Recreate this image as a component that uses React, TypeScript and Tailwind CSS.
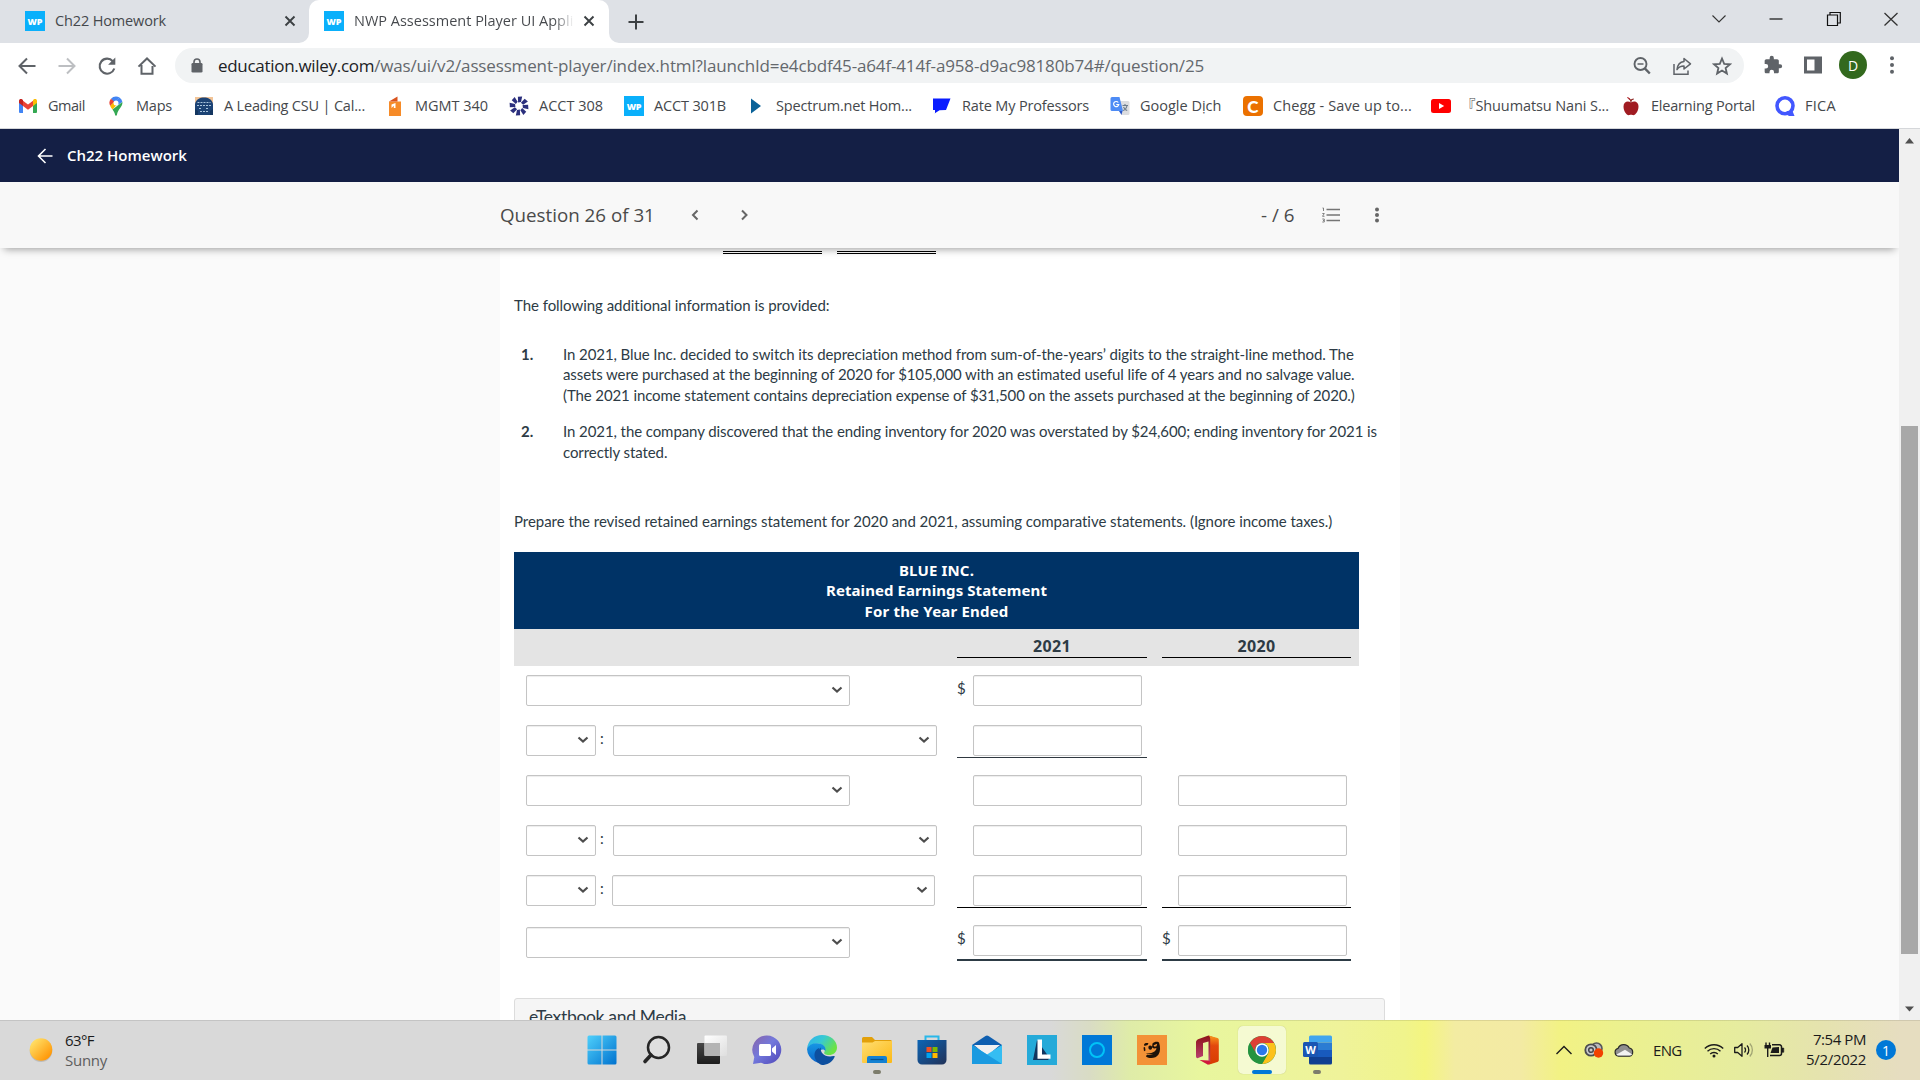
import type { ReactNode } from "react";

function WpIcon() {
  return (
    <span className="flex h-5 w-5 shrink-0 items-center justify-center bg-[#0ab0fb] font-['Open_Sans',sans-serif] text-[9px] font-extrabold leading-none text-white">
      WP
    </span>
  );
}

function CloseX() {
  return (
    <svg width="12" height="12" viewBox="0 0 12 12" stroke="#3c4043" strokeWidth="1.9" fill="none">
      <path d="M1.5 1.5l9 9M10.5 1.5l-9 9" />
    </svg>
  );
}

function TabStrip() {
  return (
    <div className="flex h-[43px] shrink-0 bg-[#dee1e6] text-[14.5px] text-[#45484c]">
      <div className="flex h-full w-[299px] items-center pl-[25px] pb-px">
        <WpIcon />
        <span className="ml-[10px] w-[225px] whitespace-nowrap pb-px tracking-[-0.14px]">Ch22 Homework</span>
        <span className="ml-[4px]"><CloseX /></span>
      </div>
      <svg className="self-end" width="10" height="10" viewBox="0 0 10 10">
        <path d="M10 0v10H0A10 10 0 0 0 10 0z" fill="#fff" />
      </svg>
      <div className="flex h-full w-[300px] items-center rounded-t-[10px] bg-white pl-[15px] pb-px">
        <WpIcon />
        <span className="ml-[10px] w-[220px] overflow-hidden whitespace-nowrap bg-linear-to-r from-[#45484c] from-91% to-transparent bg-clip-text pb-px text-transparent">
          NWP Assessment Player UI Appli
        </span>
        <span className="ml-[9px]"><CloseX /></span>
      </div>
      <svg className="self-end" width="10" height="10" viewBox="0 0 10 10">
        <path d="M0 0v10h10A10 10 0 0 1 0 0z" fill="#fff" />
      </svg>
      <div className="flex w-[34px] items-center justify-center">
        <svg width="16" height="16" viewBox="0 0 16 16" stroke="#3c4043" strokeWidth="2"><path d="M8 0.5v15M0.5 8h15" /></svg>
      </div>
      <div className="ml-auto flex h-[37px] items-center gap-[41.500px] pr-[21px]">
        <svg width="16" height="16" viewBox="0 0 16 16" fill="none" stroke="#333" strokeWidth="1.1"><path d="M1.5 4.500L8 11l6.500-6.500" /></svg>
        <svg width="16" height="16" viewBox="0 0 16 16" stroke="#111" strokeWidth="1.2"><path d="M1.500 8h13" /></svg>
        <svg width="16" height="16" viewBox="0 0 16 16" fill="none" stroke="#111" strokeWidth="1.2"><path d="M1.500 4h10v10.500h-10zM4 4V1.500h10.300V12h-2.600" /></svg>
        <svg width="16" height="16" viewBox="0 0 16 16" stroke="#333" strokeWidth="1.3"><path d="M1.500 2l13 12.500M14.500 2l-13 12.500" /></svg>
      </div>
    </div>
  );
}

function Toolbar() {
  return (
    <div className="flex h-[45px] shrink-0 items-center bg-white">
      <div className="flex w-[175px] items-center gap-[20px] pl-[17px]">
        <svg width="20" height="20" viewBox="0 0 20 20" fill="none" stroke="#5f6368" strokeWidth="2"><path d="M18.500 10H3M10 2.500L2.500 10l7.500 7.500" /></svg>
        <svg width="20" height="20" viewBox="0 0 20 20" fill="none" stroke="#bdbfc2" strokeWidth="2"><path d="M1.500 10H17M10 2.500l7.500 7.500-7.500 7.500" /></svg>
        <svg width="20" height="20" viewBox="0 0 20 20" fill="none" stroke="#5f6368" strokeWidth="2.100"><path d="M15.800 5.200A7.500 7.500 0 1 0 17.300 12.500" /><path d="M18.300 1.500v7.200h-7.200z" fill="#5f6368" stroke="none" /></svg>
        <svg width="20" height="20" viewBox="0 0 20 20" fill="none" stroke="#5f6368" strokeWidth="2"><path d="M4.500 10v7.800h11V10M1.500 10.600L10 2.500l8.500 8.100M4.500 9V17.800" /></svg>
      </div>
      <div className="flex h-[35px] w-[1569px] items-center rounded-full bg-[#f1f3f4] pl-[16px] pr-[12px]">
        <svg width="12" height="15" viewBox="0 0 12 15"><rect x="0.500" y="5" width="11" height="9.500" rx="1.300" fill="#5f6368" /><path d="M3 5.500V4a3 3 0 0 1 6 0v1.500" fill="none" stroke="#5f6368" strokeWidth="1.600" /></svg>
        <span className="ml-[15px] whitespace-nowrap text-[17px] text-[#202124] tracking-[-0.3px]">education.wiley.com</span>
        <span className="whitespace-nowrap text-[17px] text-[#64686d] tracking-[-0.147px]">
          /was/ui/v2/assessment-player/index.html?launchId=e4cbdf45-a64f-414f-a958-d9ac98180b74#/question/25
        </span>
        <div className="ml-auto flex items-center gap-[20px]">
          <svg width="20" height="20" viewBox="0 0 20 20" fill="none" stroke="#5f6368"><circle cx="8.500" cy="8" r="6" strokeWidth="1.900" /><path d="M12.800 12.400l5 5.100" strokeWidth="2.400" /><path d="M5.500 8h6" strokeWidth="1.500" /></svg>
          <svg width="20" height="20" viewBox="0 0 20 20" fill="none" stroke="#5f6368" strokeWidth="1.500"><path d="M2 8v10.300h14V14.500" /><path d="M12 2.500l6.500 5.300-6.500 5.200V10c-3.500 0-5.500 1.200-7 3.500.5-4.500 3-7.500 7-8z" strokeLinejoin="round" /></svg>
          <svg width="20" height="20" viewBox="0 0 20 20" fill="none" stroke="#5f6368" strokeWidth="1.800"><path d="M10 2.500l2.200 5.300 5.700.5-4.300 3.700 1.300 5.600-4.900-3-4.900 3 1.300-5.600L2.100 8.300l5.700-.5z" /></svg>
        </div>
      </div>
      <div className="flex items-center pl-[19px] pb-px">
        <svg width="20" height="20" viewBox="0 0 24 24" fill="#5f6368"><path d="M20.500 11H19V7c0-1.100-.9-2-2-2h-4V3.500a2.500 2.500 0 0 0-5 0V5H4c-1.100 0-2 .9-2 2v3.800h1.500a2.700 2.700 0 0 1 0 5.400H2V20c0 1.100.9 2 2 2h3.800v-1.500a2.700 2.700 0 0 1 5.400 0V22H17c1.100 0 2-.9 2-2v-4h1.500a2.500 2.500 0 0 0 0-5z" /></svg>
        <svg className="ml-[20px]" width="20" height="20" viewBox="0 0 20 20"><path d="M1 1.500h18v17H1z" fill="#5f6368" /><path d="M4 4.500h7.500v11H4z" fill="#fff" /></svg>
        <span className="ml-[16px] flex h-7 w-7 items-center justify-center rounded-full bg-[#33691e] text-[14px] text-white">D</span>
        <svg className="ml-[15px]" width="20" height="20" viewBox="0 0 20 20" fill="#5f6368"><circle cx="10" cy="3.300" r="2" /><circle cx="10" cy="10" r="2" /><circle cx="10" cy="16.700" r="2" /></svg>
      </div>
    </div>
  );
}

const GmailIcon = (
  <svg width="20" height="20" viewBox="0 0 20 20">
    <path d="M1 5v11a1 1 0 0 0 1 1h3V8.500z" fill="#4285f4" />
    <path d="M19 5v11a1 1 0 0 1-1 1h-3V8.500z" fill="#34a853" />
    <path d="M5 4.700v5.300l5 3.700 5-3.700V4.700l-5 3.700z" fill="#ea4335" />
    <path d="M1 5c0-2 2-2.500 3.300-1.500l.7.500v6L1 7z" fill="#c5221f" />
    <path d="M19 5c0-2-2-2.500-3.300-1.500l-.7.500v6L19 7z" fill="#fbbc04" />
  </svg>
);
const MapsIcon = (
  <svg width="20" height="20" viewBox="0 0 20 20">
    <path d="M10 0.500a6.500 6.500 0 0 0-5 2.300L8 7.500l5.500-6A6.500 6.500 0 0 0 10 .5z" fill="#4285f4" />
    <path d="M5 2.800A6.500 6.500 0 0 0 4.200 10L8.500 6z" fill="#ea4335" />
    <path d="M13.500 1.500A6.500 6.500 0 0 1 16.400 6L11 9.500 8.500 6z" fill="#4285f4" />
    <path d="M4.200 10c.5 1.300 1.400 2.400 2.300 3.500L12 7.500 8.300 5.500z" fill="#fbbc04" />
    <path d="M16.400 6c.5 5-4.400 6.500-5.500 13-.2 1-1.600 1-1.800 0-.5-2.500-1.500-4-2.600-5.500z" fill="#34a853" />
    <circle cx="10" cy="7" r="2.500" fill="#fff" />
  </svg>
);
const CsuIcon = (
  <svg width="20" height="20" viewBox="0 0 20 20">
    <rect x="1" y="1" width="18" height="18" fill="#f2c497" />
    <path d="M1 8C2 3 6 1.500 10 1.500S18 3 19 8v11H1z" fill="#1c4375" />
    <path d="M3.500 6.500h13M3 9.500h14M5 12.500h3M12 12.500h3M6 15.500h8" stroke="#a9c4dd" strokeWidth="1.200" strokeDasharray="2 1" />
    <path d="M1 13l3 2v4H1zM19 13l-3 2v4h3z" fill="#14365f" />
  </svg>
);
const DoorIcon = (
  <svg width="20" height="20" viewBox="0 0 20 20">
    <path d="M4 5.500h12V20H4z" fill="#f68b28" />
    <path d="M4 5.500L12.500.5v5z" fill="#d9541e" />
    <path d="M6.500 8.500L10.500 7v5H8.800V9.800L6.500 12z" fill="#fff" />
  </svg>
);
const SpinIcon = (
  <svg width="20" height="20" viewBox="0 0 20 20" fill="#2b2f7d">
    {[10, 55, 100, 145, 190, 235, 280, 325].map((a) => (
      <path key={a} d="M7.300 1.200l4.200-1-.2 5.600-2.800.8z" transform={`rotate(${a} 10 10)`} />
    ))}
  </svg>
);
const PlayIcon = (
  <svg width="20" height="20" viewBox="0 0 20 20"><path d="M5 2.500L15 10 5 17.500z" fill="#0a6299" /></svg>
);
const RmpIcon = (
  <svg width="20" height="20" viewBox="0 0 20 20"><path d="M1 2.500h17.500L14 14l-6.500.3L2.500 17.500H3V14H1z" fill="#0a1cff" /></svg>
);
const TranslateIcon = (
  <svg width="20" height="20" viewBox="0 0 20 20">
    <path d="M8 5h10a1.500 1.500 0 0 1 1.500 1.500v11A1.500 1.500 0 0 1 18 19h-6.500z" fill="#dcdde0" />
    <path d="M12.500 9.500h5.500M15 8v1.500M17 9.500c-.5 3-2.500 4.500-4 5M13.500 11c.8 2 2.300 3 3.700 3.500" stroke="#6c7c8c" strokeWidth="1.100" fill="none" />
    <path d="M9 15h3.500L11.500 19z" fill="#2a56c6" />
    <path d="M2 1h7.500l3.500 14H2A1.500 1.500 0 0 1 .5 13.500v-11A1.500 1.500 0 0 1 2 1z" fill="#4d8bf5" />
    <path d="M8.300 6.500A2.600 2.600 0 1 0 8.800 8.500H6.300" stroke="#fff" strokeWidth="1.200" fill="none" />
  </svg>
);
const CheggIcon = (
  <span className="flex h-5 w-5 items-center justify-center rounded-[4px] bg-[#eb7100] font-[Lato,sans-serif] text-[17px] font-black leading-none text-white">C</span>
);
const YoutubeIcon = (
  <svg width="20" height="20" viewBox="0 0 20 20"><rect y="3" width="20" height="14" rx="2.500" fill="#f00" /><path d="M8 7l5.200 3L8 13z" fill="#fff" /></svg>
);
const AppleIcon = (
  <svg width="20" height="20" viewBox="0 0 20 20">
    <path d="M10 6.500c3-2 7.500-1 7.500 4S14 20 11.500 19c-1-.4-2-.4-3 0C6 20 2.500 15.500 2.500 10.500s4.500-6 7.500-4z" fill="#a01c22" />
    <path d="M10.200 6.500C10.200 5 9.500 3.500 8 2.500M9.800 5c.5-1.300 1.500-2 3-2" stroke="#8a1f1c" strokeWidth="1.200" fill="none" />
    <path d="M6 1c1.500 0 2.800 1.200 3.200 2.800C7.700 3.500 6.400 2.500 6 1z" fill="#b3262c" />
  </svg>
);
const QIcon = (
  <svg width="20" height="20" viewBox="0 0 20 20"><circle cx="10" cy="9.800" r="8" fill="none" stroke="#4257ff" strokeWidth="3.600" /><path d="M11.500 15h6l2 5h-6z" fill="#4257ff" /></svg>
);

function Bookmark({ icon, label, cls }: { icon: ReactNode; label: string; cls: string }) {
  return (
    <div className={"flex shrink-0 items-center gap-[10px] whitespace-nowrap " + cls}>
      <span className="flex h-5 w-5 shrink-0">{icon}</span>
      <span>{label}</span>
    </div>
  );
}

function BookmarksBar() {
  return (
    <div className="flex h-[41px] shrink-0 items-center border-b border-[#d5d7da] bg-white pb-[4px] pl-[18px] text-[14.5px] text-[#45484c]">
      <Bookmark icon={GmailIcon} label="Gmail" cls="w-[88px] tracking-[-0.47px]" />
      <Bookmark icon={MapsIcon} label="Maps" cls="w-[88px] tracking-[-0.22px]" />
      <Bookmark icon={CsuIcon} label="A Leading CSU | Cal..." cls="w-[191px] tracking-[-0.19px]" />
      <Bookmark icon={DoorIcon} label="MGMT 340" cls="w-[124px] tracking-[-0.03px]" />
      <Bookmark icon={SpinIcon} label="ACCT 308" cls="w-[115px]" />
      <Bookmark icon={<WpIcon />} label="ACCT 301B" cls="w-[122px] tracking-[-0.16px]" />
      <Bookmark icon={PlayIcon} label="Spectrum.net Hom..." cls="w-[186px] tracking-[-0.18px]" />
      <Bookmark icon={RmpIcon} label="Rate My Professors" cls="w-[178px] tracking-[-0.16px]" />
      <Bookmark icon={TranslateIcon} label="Google Dịch" cls="w-[133px]" />
      <Bookmark icon={CheggIcon} label="Chegg - Save up to..." cls="w-[188px] tracking-[0.13px]" />
      <Bookmark icon={YoutubeIcon} label="『Shuumatsu Nani S..." cls="w-[190px] font-['Open_Sans','Noto_Sans_CJK_JP',sans-serif] tracking-[-0.1px]" />
      <Bookmark icon={AppleIcon} label="Elearning Portal" cls="w-[154px] tracking-[-0.2px]" />
      <Bookmark icon={QIcon} label="FICA" cls="tracking-[0.28px]" />
    </div>
  );
}

function Select({ cls = "w-[324px]" }: { cls?: string }) {
  return (
    <div className={"flex h-[31px] shrink-0 items-center justify-end rounded-[2px] border border-[#c4c4c4] bg-white pr-[6px] shadow-[inset_0_1px_1px_rgba(0,0,0,0.075)] " + cls}>
      <svg width="12" height="8" viewBox="0 0 12 8" fill="none" stroke="#4d4d4d" strokeWidth="2.200"><path d="M1.500 1.500L6 5.500l4.500-4" /></svg>
    </div>
  );
}

function Amount({ dollar, line, hidden, width = "w-[190px]" }: { dollar?: boolean; line?: "thin" | "black" | "total"; hidden?: boolean; width?: string }) {
  const border =
    line === "total" ? "h-[36px] border-b-2 border-[#2d3b45]" : line === "black" ? "h-[33px] border-b border-black" : line === "thin" ? "h-[33px] border-b border-[#2f3840]" : "";
  return (
    <div className={"flex items-start " + width + " " + border}>
      {!hidden && (
        <>
          <span className="w-4 text-[15px] leading-[27px]">{dollar ? "$" : ""}</span>
          <div className="h-[31px] w-[169px] rounded-[2px] border border-[#c4c4c4] bg-white shadow-[inset_0_1px_1px_rgba(0,0,0,0.075)]" />
        </>
      )}
    </div>
  );
}

function Row({ left, a, b }: { left: ReactNode; a: ReactNode; b: ReactNode }) {
  return (
    <div className="flex h-[50px] items-start pl-3">
      <div className="flex w-[431px] items-start">{left}</div>
      {a}
      <div className="ml-[15px]">{b}</div>
    </div>
  );
}

function Pair({ cls = "w-[324px] ml-[10px]" }: { cls?: string }) {
  return (
    <>
      <Select cls="w-[70px]" />
      <span className="w-[7px] pl-[4px] text-[15px] leading-[27px]">:</span>
      <Select cls={cls} />
    </>
  );
}

function Question() {
  return (
    <div className="flex h-[772px] w-[900px] flex-col overflow-hidden bg-white font-[Lato,sans-serif] text-[15px] leading-[20.500px] text-[#2d3b45]">
      <div className="flex h-[6px] shrink-0 gap-[15px] pl-[223px]">
        <div className="w-[99px] border-b-3 border-double border-black" />
        <div className="w-[99px] border-b-3 border-double border-black" />
      </div>
      <p className="mt-[41px] pl-[14px] tracking-[-0.043px]">The following additional information is provided:</p>
      <div className="mt-[28px] flex whitespace-nowrap">
        <span className="w-[63px] pl-[21px] font-bold">1.</span>
        <div className="tracking-[-0.1px]">
          <p className="tracking-[-0.087px]">In 2021, Blue Inc. decided to switch its depreciation method from sum-of-the-years’ digits to the straight-line method. The</p>
          <p>assets were purchased at the beginning of 2020 for $105,000 with an estimated useful life of 4 years and no salvage value.</p>
          <p className="tracking-[-0.106px]">(The 2021 income statement contains depreciation expense of $31,500 on the assets purchased at the beginning of 2020.)</p>
        </div>
      </div>
      <div className="mt-[16px] flex whitespace-nowrap">
        <span className="w-[63px] pl-[21px] font-bold">2.</span>
        <div className="tracking-[-0.084px]">
          <p>In 2021, the company discovered that the ending inventory for 2020 was overstated by $24,600; ending inventory for 2021 is</p>
          <p>correctly stated.</p>
        </div>
      </div>
      <p className="mt-[49px] whitespace-nowrap pl-[14px] tracking-[-0.037px]">
        Prepare the revised retained earnings statement for 2020 and 2021, assuming comparative statements. (Ignore income taxes.)
      </p>
      <div className="ml-[14px] mt-[20px] flex w-[845px] shrink-0 flex-col">
        <div className="flex h-[77px] flex-col items-center bg-[#003366] pt-[8px] font-['Noto_Sans',sans-serif] font-bold text-white">
          <span className="tracking-[0.14px]">BLUE INC.</span>
          <span className="tracking-[0.077px]">Retained Earnings Statement</span>
          <span className="tracking-[0.189px]">For the Year Ended</span>
        </div>
        <div className="flex h-[37px] bg-[#e4e4e4] pl-[443px] font-['Noto_Sans',sans-serif] text-[16px] font-bold tracking-[0.35px]">
          <div className="h-[29px] w-[190px] border-b border-black pt-[7px] text-center">2021</div>
          <div className="ml-[15px] h-[29px] w-[189px] border-b border-black pt-[7px] text-center">2020</div>
        </div>
        <div className="pt-[9px]">
          <Row left={<Select />} a={<Amount dollar />} b={<Amount hidden />} />
          <Row left={<Pair />} a={<Amount line="thin" />} b={<Amount hidden />} />
          <Row left={<Select />} a={<Amount />} b={<Amount />} />
          <Row left={<Pair />} a={<Amount />} b={<Amount />} />
          <Row left={<Pair cls="w-[323px] ml-[9px]" />} a={<Amount line="black" />} b={<Amount line="black" width="w-[189px]" />} />
          <Row left={<Select cls="w-[324px] mt-[2px]" />} a={<Amount dollar line="total" />} b={<Amount dollar line="total" width="w-[189px]" />} />
        </div>
      </div>
      <div className="ml-[14px] mt-[23px] h-[60px] w-[871px] shrink-0 rounded-[3px] border border-[#dcdcdc] bg-[#f5f5f5] pl-[14px] pt-[8px] text-[17.500px] tracking-[-0.32px]">
        eTextbook and Media
      </div>
    </div>
  );
}

function Page() {
  return (
    <div className="flex h-[891px] shrink-0">
      <div className="flex w-[1899px] flex-col overflow-hidden bg-[#fafafa]">
        <div className="flex h-[53px] shrink-0 items-center bg-[#141f45] pl-[37px]">
          <svg width="16" height="16" viewBox="0 0 16 16" fill="none" stroke="#fff" strokeWidth="1.600"><path d="M15.500 8H1.500M8.500 1L1.500 8l7 7" /></svg>
          <span className="ml-[14px] text-[15px] font-semibold text-white">Ch22 Homework</span>
        </div>
        <div className="z-10 flex h-[66px] shrink-0 items-center bg-[#f8f8f8] pl-[500px] text-[#4a4a4a] shadow-[0_5px_8px_-4px_rgba(0,0,0,0.4)]">
          <span className="w-[188px] whitespace-nowrap text-[18.750px]">Question 26 of 31</span>
          <svg width="14" height="14" viewBox="0 0 14 14" fill="none" stroke="#666" strokeWidth="2"><path d="M9.500 2.500L5 7l4.500 4.500" /></svg>
          <svg className="ml-[35px]" width="14" height="14" viewBox="0 0 14 14" fill="none" stroke="#666" strokeWidth="2"><path d="M5 2.500L9.500 7 5 11.500" /></svg>
          <span className="ml-[510px] w-[61px] whitespace-nowrap text-[18.750px]">- / 6</span>
          <svg width="18" height="16" viewBox="0 0 18 16" fill="none" stroke="#757575">
            <path d="M4.500 2.500H18M4.500 8H18M4.500 13.500H18" strokeWidth="1.700" />
            <path d="M.5 1h1v3M.3 6.500h2L.5 9.300h2M.3 12h2v3h-2M1 13.500h1" strokeWidth="0.900" />
          </svg>
          <svg className="ml-[33px]" width="8" height="16" viewBox="0 0 8 16" fill="#666"><circle cx="4" cy="2.500" r="2" /><circle cx="4" cy="8" r="2" /><circle cx="4" cy="13.500" r="2" /></svg>
        </div>
        <div className="pl-[500px]"><Question /></div>
      </div>
      <div className="flex w-[21px] flex-col items-center bg-[#f0f0f0]">
        <svg className="mt-[8px]" width="9" height="8" viewBox="0 0 9 8"><path d="M0 6.500L4.500 1 9 6.500z" fill="#505050" /></svg>
        <div className="mt-[281px] h-[528px] w-[17px] bg-[#a8a8a8]" />
        <svg className="mt-[52px]" width="9" height="6" viewBox="0 0 9 6"><path d="M0 .5h9L4.500 5.500z" fill="#505050" /></svg>
      </div>
    </div>
  );
}

function TaskbarApp({ children, mark }: { children: ReactNode; mark?: "dot" | "active" }) {
  return (
    <div className="flex h-full w-[55px] items-center justify-center">
      <div className={"flex h-12 w-12 flex-col items-center pt-[9px] " + (mark === "active" ? "rounded-[5px] bg-[#f5fad2] shadow-[0_0_1px_rgba(0,0,0,0.25)]" : "")}>
        {children}
        {mark === "dot" && <span className="mt-[5px] h-[4px] w-[8px] rounded-full bg-[#7c7c6c]" />}
        {mark === "active" && <span className="mt-[5px] h-[4px] w-[20px] rounded-full bg-[#0078d7]" />}
      </div>
    </div>
  );
}

function TaskbarApps() {
  return (
    <>
      <TaskbarApp>
        <svg width="30" height="30" viewBox="0 0 30 30">
          <defs><linearGradient id="win" x1="0" y1="0" x2="1" y2="1"><stop stopColor="#4fd0fb" /><stop offset="1" stopColor="#0072cf" /></linearGradient></defs>
          <path d="M2 .5h12.500V14.500H.5V2A1.500 1.500 0 0 1 2 .5zM15.500.5H28A1.500 1.500 0 0 1 29.500 2v12.500h-14zM.5 15.500h14v14H2A1.500 1.500 0 0 1 .5 28zM15.500 15.500h14V28a1.500 1.500 0 0 1-1.500 1.500H15.500z" fill="url(#win)" />
        </svg>
      </TaskbarApp>
      <TaskbarApp>
        <svg width="30" height="30" viewBox="0 0 30 30" fill="none" stroke="#262626"><circle cx="16.500" cy="12.500" r="10.500" strokeWidth="2.500" fill="#dfdfdf" /><path d="M9 20l-6 6.500" strokeWidth="3.600" strokeLinecap="round" /></svg>
      </TaskbarApp>
      <TaskbarApp>
        <svg width="30" height="30" viewBox="0 0 30 30">
          <defs>
            <linearGradient id="tv1" x1="0" y1="0" x2="0" y2="1"><stop stopColor="#474747" /><stop offset="1" stopColor="#1d1d1d" /></linearGradient>
            <linearGradient id="tv2" x1="0" y1="0" x2="1" y2="1"><stop stopColor="#fff" /><stop offset="1" stopColor="#dedede" /></linearGradient>
          </defs>
          <rect x="0" y="8" width="23" height="21" rx="1" fill="url(#tv1)" />
          <rect x="7.500" y=".5" width="22.500" height="20.500" rx="1" fill="url(#tv2)" />
          <path d="M7.500 8H23v13H8.500a1 1 0 0 1-1-1z" fill="#b4b4b4" />
        </svg>
      </TaskbarApp>
      <TaskbarApp>
        <svg width="30" height="30" viewBox="0 0 30 30">
          <defs><linearGradient id="chat" x1="0" y1="0" x2="1" y2="1"><stop stopColor="#8a64a8" /><stop offset=".45" stopColor="#7379dc" /><stop offset="1" stopColor="#4f46b8" /></linearGradient></defs>
          <path d="M15 .5a14.300 14.300 0 1 1-6 27.300L1 29l1.300-7A14.300 14.300 0 0 1 15 .5z" fill="url(#chat)" />
          <rect x="7" y="9" width="12" height="12" rx="1.500" fill="#fff" /><path d="M20 13.500l4-3.500v10l-4-3.500z" fill="#fff" />
        </svg>
      </TaskbarApp>
      <TaskbarApp>
        <svg width="30" height="30" viewBox="0 0 30 30">
          <defs>
            <linearGradient id="e1" x1="0" y1="0" x2="1" y2=".5"><stop stopColor="#2fb0f0" /><stop offset=".5" stopColor="#37c9d3" /><stop offset="1" stopColor="#6be343" /></linearGradient>
            <linearGradient id="e2" x1="0" y1="0" x2="0" y2="1"><stop stopColor="#1697e4" /><stop offset="1" stopColor="#0c63c8" /></linearGradient>
          </defs>
          <path d="M0 14C1 5 7.500 0 15 0c9 0 15 6 15 12.500 0 5-4 7.500-8 7.500-3.500 0-5.500-1.300-4.700-2.700C19.500 13 16.500 8.500 10.500 8.500 5 8.500 1 11 0 14z" fill="url(#e1)" />
          <path d="M0 14c1.500-4 5.500-5.700 10-5.700 5.500 0 9.500 3.700 8.300 7.700C17 13 12 14.500 11.500 18c-.5 5 4 9.500 10.500 8.500A15 15 0 0 1 0 14z" fill="url(#e2)" />
          <path d="M11.500 18c-.5-2 .5-4.500 2.500-5.500-1.500 5 4 10.500 12.500 8.500 1.500-.4 1.500.5.800 1.500C24.500 28 20 30 15 30c-4-1-8-6-7.500-11 .3-3 2-5 4.500-6z" fill="#0d4f9f" />
        </svg>
      </TaskbarApp>
      <TaskbarApp mark="dot">
        <svg width="30" height="30" viewBox="0 0 30 30">
          <defs><linearGradient id="fo" x1="0" y1="0" x2="1" y2="1"><stop stopColor="#ffde73" /><stop offset="1" stopColor="#fcb915" /></linearGradient></defs>
          <path d="M0 8V3.500A1.500 1.500 0 0 1 1.500 2H10l3 3h15.500A1.500 1.500 0 0 1 30 6.500V10H0z" fill="#e2a00a" />
          <path d="M0 7.500h10.500L13 6h17v21a1 1 0 0 1-1 1H1a1 1 0 0 1-1-1z" fill="url(#fo)" />
          <path d="M5 28v-5a2 2 0 0 1 2-2h16a2 2 0 0 1 2 2v5z" fill="#1481d2" /><path d="M8.500 24.500h13" stroke="#07538f" strokeWidth="1.200" />
        </svg>
      </TaskbarApp>
      <TaskbarApp>
        <svg width="30" height="30" viewBox="0 0 30 30">
          <defs><linearGradient id="st" x1="0" y1="0" x2="1" y2="1"><stop stopColor="#0c65b5" /><stop offset="1" stopColor="#223258" /></linearGradient></defs>
          <path d="M8.500 5.500v-4h13v4" fill="none" stroke="#29b8ea" strokeWidth="2" />
          <path d="M.5 5h29v20a4.500 4.500 0 0 1-4.500 4.500H5A4.500 4.500 0 0 1 .5 25z" fill="url(#st)" />
          <path d="M9.500 12h5v5h-5z" fill="#f25022" /><path d="M15.500 12h5v5h-5z" fill="#7fba00" /><path d="M9.500 18h5v5h-5z" fill="#00a4ef" /><path d="M15.500 18h5v5h-5z" fill="#ffb900" />
        </svg>
      </TaskbarApp>
      <TaskbarApp>
        <svg width="30" height="30" viewBox="0 0 30 30">
          <path d="M0 10L13.500 1a3 3 0 0 1 3 0L30 10v6H0z" fill="#0f5fb0" />
          <path d="M2 10h26l-13 11z" fill="#f1f1f1" />
          <path d="M0 10l15 9.500L30 10v18a1 1 0 0 1-1 1H1a1 1 0 0 1-1-1z" fill="#35bdf2" />
          <path d="M0 29l15-9.500L0 10zM15 19.500L30 29H0z" fill="#1a9ae0" />
        </svg>
      </TaskbarApp>
      <TaskbarApp>
        <div className="flex h-[30px] w-[30px] items-center justify-center bg-[#25aad9]">
          <svg width="18" height="22" viewBox="0 0 18 22"><path d="M4 1L0 21h15l1.500-2z" fill="#12355f" /><path d="M4.500.5H9v15h8.500v4.300h-13z" fill="#fff" /></svg>
        </div>
      </TaskbarApp>
      <TaskbarApp>
        <div className="flex h-[30px] w-[30px] items-center justify-center bg-[#0078d7]"><span className="h-4 w-4 rounded-full border-[2.500px] border-[#00c3f7]" /></div>
      </TaskbarApp>
      <TaskbarApp>
        <div className="flex h-[30px] w-[30px] items-center justify-center bg-[#f39237]">
          <svg width="20" height="20" viewBox="0 0 20 20" fill="#1d1209">
            <path d="M10.500 3.500C12 1.500 16 1 17 2.500c1.500 4 1.500 9-.5 12-2.500 4-9 4.500-12.500 2 .2-1.500 1-2 2.500-1.800 2 .3 3.500.3 4.500-.4-2.500.4-5.500.2-7-1 3 .3 6.500-.3 8.500-1.800 1.500-1.200 2-2.500 1.800-3.500-1.500.7-3 .5-4.300-.8z" />
            <path d="M2 4.500C3 3 5 2.800 6.500 3.500L5.500 5 2.500 6zM6.500 6.500a2 2 0 1 1 1 3c-1-.5-1.300-2-1-3zM1.500 7.500L3 7l.5 3.500-1.500.8z" />
            <path d="M11.500 5.200l3.700-1.400-.7 2.400-2 .6z" fill="#f39237" />
          </svg>
        </div>
      </TaskbarApp>
      <TaskbarApp>
        <svg width="30" height="30" viewBox="0 0 30 30">
          <defs>
            <linearGradient id="o1" x1="0" y1="0" x2="0" y2="1"><stop stopColor="#8d1218" /><stop offset="1" stopColor="#c34a83" /></linearGradient>
            <linearGradient id="o2" x1="0" y1="0" x2="0" y2="1"><stop stopColor="#f99a1c" /><stop offset=".35" stopColor="#e3480d" /><stop offset="1" stopColor="#d83b01" /></linearGradient>
          </defs>
          <path d="M16.500.5L26 4v21l-9.500 4V6.500L11 8v13l-5.500 2.300a2 2 0 0 1-1.500-1.800V7.500C4 6 4.500 5 6 4.200z" fill="url(#o1)" />
          <path d="M7.500 25l9 .5L20 28l-4 1.700z" fill="#d0173c" />
          <path d="M16.500.5l9 2.500C26.300 3.300 26.800 4 26.800 5v20c0 1-.6 1.800-1.500 2l-8.800 2.700c1.200-1 1.700-2 1.700-3.500V4c0-1.500-.5-2.700-1.700-3.500z" fill="url(#o2)" />
        </svg>
      </TaskbarApp>
      <TaskbarApp mark="active">
        <svg width="30" height="30" viewBox="0 0 30 30">
          <circle cx="15" cy="15" r="14" fill="#2b9348" />
          <path d="M2.900 8A14 14 0 0 1 27.100 8H15a7 7 0 0 0-6.100 10.500z" fill="#dd4034" />
          <path d="M27.100 8A14 14 0 0 1 15 29l6.100-10.500A7 7 0 0 0 15 8z" fill="#fcc11a" />
          <path d="M2.900 8L8.900 18.500A7 7 0 0 0 21.100 18.500L15 29A14 14 0 0 1 2.900 8z" fill="#24933f" />
          <circle cx="15" cy="15" r="6.700" fill="#fff" /><circle cx="15" cy="15" r="5.200" fill="#2b78ea" />
        </svg>
      </TaskbarApp>
      <TaskbarApp mark="dot">
        <svg width="30" height="30" viewBox="0 0 30 30">
          <path d="M7 2A1.500 1.500 0 0 1 8.500.5h20A1.500 1.500 0 0 1 30 2v5.500H7z" fill="#41a5ee" /><path d="M7 7.500h23V15H7z" fill="#2b7cd3" /><path d="M7 15h23v7H7z" fill="#185abd" /><path d="M7 22h23v6a1.500 1.500 0 0 1-1.500 1.500h-20A1.500 1.500 0 0 1 7 28z" fill="#103f91" />
          <rect x="1" y="7" width="15" height="15" rx="1.500" fill="#1a56b3" />
          <text x="8.500" y="18.500" textAnchor="middle" fontSize="11" fontWeight="700" fontFamily="Open Sans" fill="#fff">W</text>
        </svg>
      </TaskbarApp>
    </>
  );
}

function Taskbar() {
  return (
    <div className="flex h-[60px] shrink-0 items-center border-t border-[#00000018] bg-[linear-gradient(90deg,#d9d9d9_0,#d9d9d9_1050px,#d9dcc4_1090px,#dfeca8_1130px,#e8f69e_1200px,#eff39a_1340px,#f0f48c_1405px,#f4f580_1425px,#f3eca2_1455px,#f3eaa4_1520px,#f2f284_1560px,#ecf18e_1620px,#e6ec9f_1740px,#e5e3ae_1820px,#e6ddc0_1900px)] pb-px">
      <div className="flex w-[574px] items-center pl-[29px]">
        <svg width="24" height="26" viewBox="0 0 24 26">
          <defs><linearGradient id="sun" x1="0" y1="0" x2="1" y2="1"><stop offset=".1" stopColor="#ffe36b" /><stop offset=".9" stopColor="#ff9200" /></linearGradient></defs>
          <circle cx="12" cy="13.800" r="11.300" fill="#00000022" /><circle cx="12" cy="12.500" r="11.300" fill="url(#sun)" />
        </svg>
        <div className="ml-[12px] flex flex-col pb-px text-[15px] leading-[20px]">
          <span className="text-[#1a1a1a] tracking-[-0.58px]">63°F</span>
          <span className="text-[#5d5d5d] tracking-[-0.27px]">Sunny</span>
        </div>
      </div>
      <TaskbarApps />
      <div className="ml-auto flex items-center pr-[24px] text-[15px] text-[#1b1b1b]">
        <svg width="16" height="10" viewBox="0 0 16 10" fill="none" stroke="#1b1b1b" strokeWidth="1.400"><path d="M.5 9L8 1.500 15.500 9" /></svg>
        <svg className="ml-[12px]" width="20" height="18" viewBox="0 0 20 18">
          <circle cx="12.500" cy="7.500" r="5.500" fill="#b9b9bd" stroke="#55555a" strokeWidth="1.600" /><circle cx="7" cy="9" r="5.700" fill="#c9c9cc" stroke="#4c4c50" strokeWidth="1.800" /><circle cx="7" cy="9" r="2.300" fill="none" stroke="#44444a" strokeWidth="1.500" />
          <circle cx="14.500" cy="12" r="4.700" fill="#f24100" />
        </svg>
        <svg className="ml-[10px]" width="20" height="14" viewBox="0 0 20 14">
          <path d="M4.500 13.200a4 4 0 0 1-.5-7.800A6.300 6.300 0 0 1 15.300 5a4.200 4.200 0 0 1 .2 8.200z" fill="#8f8f8f" stroke="#2a2a2a" strokeWidth="1.200" />
          <path d="M2.500 11.500L11 6.800l7 4.500c-.5 1-1.500 1.300-2.500 1.300h-11c-1 0-1.600-.4-2-1.100z" fill="#f2f2f2" />
        </svg>
        <span className="ml-[19px] w-[51px] tracking-[-0.68px]">ENG</span>
        <svg width="20" height="16" viewBox="0 0 20 16" fill="none" stroke="#1b1b1b" strokeWidth="1.400"><path d="M.8 6.500a13 13 0 0 1 18.400 0M3.500 9.300a9.200 9.200 0 0 1 13 0M6.200 12a5.400 5.400 0 0 1 7.600 0" /><circle cx="10" cy="14" r="1.500" fill="#1b1b1b" stroke="none" /></svg>
        <svg className="ml-[10px]" width="20" height="16" viewBox="0 0 20 16" fill="none" stroke="#1b1b1b" strokeWidth="1.300"><path d="M.7 5.500h3L8 1.700v12.600l-4.300-3.800h-3z" strokeLinejoin="round" /><path d="M10.500 5.500a3.500 3.500 0 0 1 0 5M13 3.500a6.500 6.500 0 0 1 0 9" /><path d="M15.800 1.500a9.500 9.500 0 0 1 0 13" stroke="#1b1b1b55" /></svg>
        <svg className="ml-[10px]" width="21" height="16" viewBox="0 0 21 16" fill="none" stroke="#1b1b1b"><path d="M8 2.800h7.500A2 2 0 0 1 17.500 5v6.500a2 2 0 0 1-2 2H6" strokeWidth="1.500" /><path d="M18 6h1.800v4.300H18z" fill="#1b1b1b" strokeWidth=".5" /><path d="M8.500 5.500L15 5v6H6.500z" fill="#1b1b1b" stroke="none" /><path d="M.5 3h6.500v3.500H.5z" fill="#1b1b1b" stroke="none" /><path d="M2 .5v3M5.500.5v3M3.700 6v9" strokeWidth="1.400" /></svg>
        <div className="ml-[5px] flex w-[76px] flex-col items-end pb-[2px] leading-[20px]">
          <span className="tracking-[-0.44px]">7:54 PM</span>
          <span className="tracking-[-0.31px]">5/2/2022</span>
        </div>
        <span className="ml-[10px] flex h-5 w-5 items-center justify-center rounded-full bg-[#0078d7] text-[14px] text-white">1</span>
      </div>
    </div>
  );
}

export default function App() {
  return (
    <div className="flex h-[1080px] w-[1920px] flex-col overflow-hidden font-['Open_Sans',sans-serif]">
      <TabStrip />
      <Toolbar />
      <BookmarksBar />
      <Page />
      <Taskbar />
    </div>
  );
}
